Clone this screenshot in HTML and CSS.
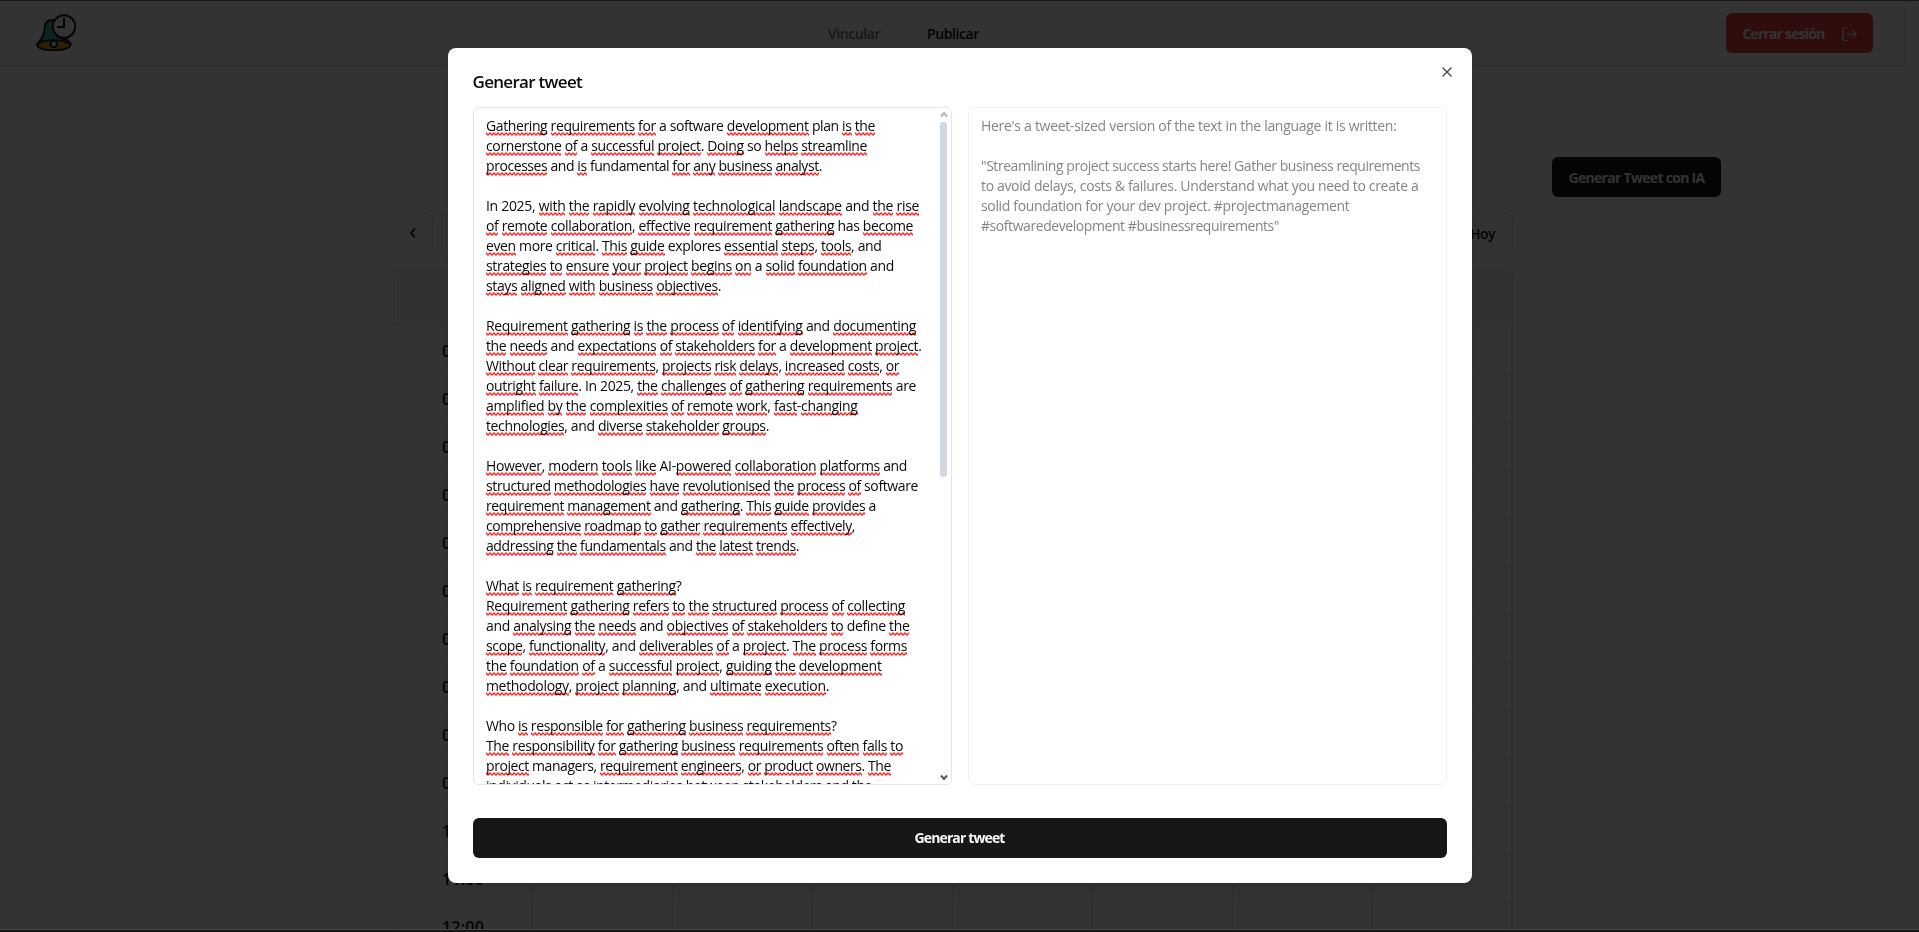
FILE: index.html
```html
<!DOCTYPE html>
<html lang="es">
<head>
<meta charset="utf-8">
<title>Publicar</title>
<link rel="stylesheet" href="styles.css">
</head>
<body>
<div class="page">
  <header class="topbar">
    <svg class="logo" viewBox="0 0 40 40" fill="none" stroke="#1c1c2b" stroke-width="2">
      <path d="M2 31C6 26 8 24 9 18C9 10 11 7 18 7L22 24L32 27L35 31Z" fill="#4fb29a"/>
      <ellipse cx="18.3" cy="32.3" rx="16.5" ry="5" fill="#d59a3c"/>
      <circle cx="18.2" cy="31" r="3.2" fill="#fff"/>
      <circle cx="28.5" cy="13.5" r="11.3" fill="#fff"/>
      <path d="M28.5 5V14H21.5"/>
    </svg>
    <nav class="nav"><span class="nav-link"><span data-w="52">Vincular</span></span><span class="nav-link active"><span data-w="52">Publicar</span></span></nav>
    <button class="btn danger"><span data-w="82">Cerrar sesión</span>
      <svg width="16" height="16" viewBox="0 0 16 16" fill="none" stroke="currentColor" stroke-width="1.2"><path d="M6.500 1.500H3.500Q2 1.500 2 3V13Q2 14.500 3.500 14.500H6.500M6 8H15M11.500 4.500L15 8L11.500 11.500"/></svg>
    </button>
  </header>
  <div class="action"><button class="btn dark"><span data-w="136">Generar Tweet con IA</span></button></div>
  <main class="calendar">
    <div class="tools">
      <div class="pair">
        <button class="square"><svg width="16" height="16" viewBox="0 0 16 16" fill="none" stroke="currentColor" stroke-width="1.7"><path d="M10 3.500L6 8L10 12.500"/></svg></button>
        <button class="square"><svg width="16" height="16" viewBox="0 0 16 16" fill="none" stroke="currentColor" stroke-width="1.7"><path d="M6 3.500L10 8L6 12.500"/></svg></button>
      </div>
      <button class="today"><span data-w="25">Hoy</span></button>
    </div>
    <div class="grid" id="grid"></div>
  </main>
</div>
<div class="overlay"></div>
<div class="edge"></div>
<div class="stage">
  <section class="dialog">
    <svg class="close" width="16" height="16" viewBox="0 0 16 16" fill="none" stroke="currentColor" stroke-width="1.3"><path d="M3.500 3.500L12.500 12.500M12.500 3.500L3.500 12.500"/></svg>
    <h2 class="title"><span data-w="109.500">Generar tweet</span></h2>
    <div class="panes">
      <div class="pane source" id="source"></div>
      <div class="pane result" id="result"></div>
    </div>
    <button class="btn submit"><span data-w="90">Generar tweet</span></button>
  </section>
</div>
<script src="app.js"></script>
</body>
</html>
```

FILE: styles.css
```css
* { box-sizing: border-box; }
body { margin: 0; height: 932px; overflow: hidden; background: #fff; color: #0a0a0a; font: 14px/20px "Open Sans", "Noto Sans", sans-serif; }
button { font: inherit; margin: 0; border: 0; padding: 0; color: inherit; background: none; }
[data-w] { display: inline-block; white-space: pre; }
.page { height: 929px; padding-top: 1px; overflow: hidden; }
.topbar { display: flex; justify-content: space-between; align-items: center; width: 1906px; height: 65px; padding: 0 32px 0 35px; border: solid #ebebeb; border-width: 0 1px 1px 0; }
.logo { width: 41px; height: 40px; margin-right: 5px; }
.nav { display: flex; gap: 47px; padding-top: 1px; font-weight: 600; }
.nav-link { color: #737373; }
.nav-link.active { color: #0a0a0a; }
.btn { display: flex; align-items: center; justify-content: center; height: 40px; padding-top: 1px; border-radius: 6px; font-weight: 700; color: #fafafa; }
.danger { width: 147px; gap: 16px; background: #ef4444; }
.action { display: flex; justify-content: flex-end; padding: 91px 198px 16px 0; }
.dark { width: 169px; background: #171717; }
.calendar { width: 1120px; margin-left: 393px; }
.tools { display: flex; justify-content: space-between; }
.pair { display: flex; gap: 8px; }
.square, .today { height: 40px; border: 1px solid #e5e5e5; border-radius: 6px; display: flex; align-items: center; justify-content: center; }
.square { width: 40px; }
.today { padding: 1px 17px 0 16px; font-weight: 600; }
.grid { display: grid; grid-template-columns: 139px repeat(6, 140px) 139px; margin-top: 16px; border: solid #e5e5e5; border-width: 1px 1px 0; border-radius: 8px 8px 0 0; overflow: hidden; }
.head { height: 56px; background: #f5f5f5; border-bottom: 1px solid #e5e5e5; }
.cell { height: 48px; padding-top: 3px; border: solid #e5e5e5; border-width: 0 1px 1px 0; display: flex; align-items: center; justify-content: center; font-size: 16px; font-weight: 600; }
.overlay { position: fixed; inset: 0; background: rgba(0, 0, 0, .8); }
.edge { position: fixed; inset: 0; border: solid #171717; border-width: 1px 0 2px; box-shadow: inset 0 -1px #484848; }
.stage { position: fixed; inset: 0 0 2px; display: flex; align-items: center; justify-content: center; }
.dialog { position: relative; width: 1024px; height: 835px; padding: 24px 25px; background: #fff; border-radius: 8px; box-shadow: 0 10px 15px -3px rgba(0, 0, 0, .1), 0 4px 6px -4px rgba(0, 0, 0, .1); }
.close { position: absolute; right: 17px; top: 16px; color: #444; }
.title { margin: 1px 0 16px; font-size: 17px; line-height: 18px; font-weight: 600; color: #0a0a0a; }
.panes { display: grid; grid-template-columns: 1fr 1fr; gap: 16px; height: 678px; }
.pane { position: relative; height: 678px; padding: 8px 12px 8px 12.5px; border: 1px solid #e5e5e5; border-radius: 6px; overflow: hidden; }
.result { color: #858585; border-color: #f2f2f2; }
.line { display: block; height: 20px; white-space: pre; }
.miss { padding-bottom: 1px; background: url("data:image/svg+xml,%3Csvg xmlns='http://www.w3.org/2000/svg' width='4' height='4'%3E%3Cpath d='M-2 3L0 1L2 3L4 1L6 3' fill='none' stroke='%23f22' stroke-width='1.250'/%3E%3C/svg%3E") repeat-x left bottom / 4px 4px; }
.scrollbar { position: absolute; right: 4px; top: 2px; bottom: 2px; width: 7px; display: flex; flex-direction: column; }
.thumb { height: 355px; margin: 4px 0 auto; border-radius: 3px; background: #cfd9e2; }
.submit { width: 100%; margin-top: 33px; background: #171717; }
```

FILE: app.js
```js
const source = [
  ["Gathering requirements for a software development plan is the", 389],
  ["cornerstone of a successful project. Doing so helps streamline", 381],
  ["processes and is fundamental for any business analyst.", 336],
  [],
  ["In 2025, with the rapidly evolving technological landscape and the rise", 433],
  ["of remote collaboration, effective requirement gathering has become", 427],
  ["even more critical. This guide explores essential steps, tools, and", 395.5],
  ["strategies to ensure your project begins on a solid foundation and", 408],
  ["stays aligned with business objectives.", 235],
  [],
  ["Requirement gathering is the process of identifying and documenting", 430],
  ["the needs and expectations of stakeholders for a development project.", 435.5],
  ["Without clear requirements, projects risk delays, increased costs, or", 413],
  ["outright failure. In 2025, the challenges of gathering requirements are", 430],
  ["amplified by the complexities of remote work, fast-changing", 371.5],
  ["technologies, and diverse stakeholder groups.", 283],
  [],
  ["However, modern tools like AI-powered collaboration platforms and", 421],
  ["structured methodologies have revolutionised the process of software", 432],
  ["requirement management and gathering. This guide provides a", 390],
  ["comprehensive roadmap to gather requirements effectively,", 369],
  ["addressing the fundamentals and the latest trends.", 313],
  [],
  ["What is requirement gathering?", 195.5],
  ["Requirement gathering refers to the structured process of collecting", 419],
  ["and analysing the needs and objectives of stakeholders to define the", 423.5],
  ["scope, functionality, and deliverables of a project. The process forms", 421],
  ["the foundation of a successful project, guiding the development", 395.5],
  ["methodology, project planning, and ultimate execution.", 343],
  [],
  ["Who is responsible for gathering business requirements?", 350.5],
  ["The responsibility for gathering business requirements often falls to", 417],
  ["project managers, requirement engineers, or product owners. The", 405],
  ["individuals act as intermediaries between stakeholders and the", 386]
];
const result = [
  ["Here's a tweet-sized version of the text in the language it is written:", 415.5],
  [],
  ["\"Streamlining project success starts here! Gather business requirements", 439],
  ["to avoid delays, costs & failures. Understand what you need to create a", 437.5],
  ["solid foundation for your dev project. #projectmanagement", 368.5],
  ["#softwaredevelopment #businessrequirements\"", 298]
];
const known = new Set(["a", "software", "plan", "so", "and", "has", "In", "more", "fundamental", "explores", "Who", "AI", "are", "managers", "define"]);

function mark(text) {
  return text.replace(/[A-Za-z]+/g, w => known.has(w) ? w : `<span class="miss">${w}</span>`);
}
function fill(id, lines, transform) {
  document.getElementById(id).innerHTML = lines.map(([t, w]) =>
    `<span class="line">${t ? `<span data-w="${w}">${transform(t)}</span>` : ""}</span>`).join("");
}
fill("source", source, mark);
fill("result", result, t => t.replace("&", "&amp;"));
document.getElementById("source").insertAdjacentHTML("beforeend",
  `<div class="scrollbar"><svg width="8" height="8" viewBox="0 0 8 8" fill="none" stroke="#b5b5b5" stroke-width="2"><path d="M1 6.500L4 3L7 6.500"/></svg><div class="thumb"></div><svg width="8" height="8" viewBox="0 0 8 8" fill="none" stroke="#555" stroke-width="2"><path d="M1 1.500L4 5L7 1.500"/></svg></div>`);

let cells = '<div class="head"></div>'.repeat(8);
for (let h = 0; h < 13; h++) {
  cells += `<div class="cell"><span data-w="42">${String(h).padStart(2, "0")}:00</span></div>` + '<div class="cell"></div>'.repeat(7);
}
document.getElementById("grid").innerHTML = cells;

document.querySelectorAll("[data-w]").forEach(el => {
  const target = parseFloat(el.dataset.w);
  const spacing = (target - el.getBoundingClientRect().width) / el.textContent.length;
  el.style.letterSpacing = spacing.toFixed(3) + "px";
});
```
